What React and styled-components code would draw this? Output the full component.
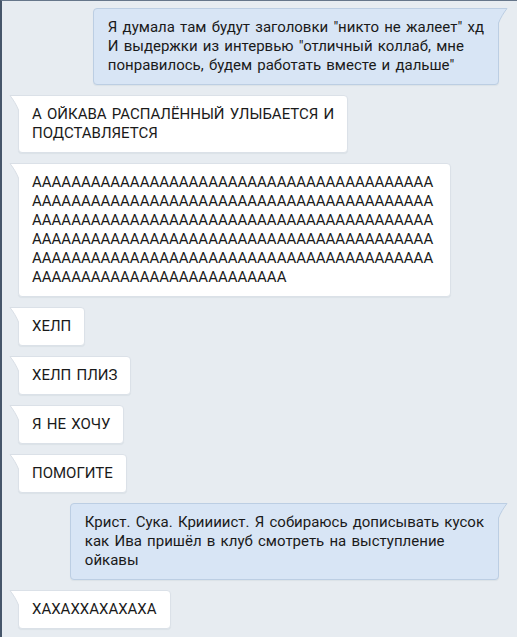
import React from "react";
import styled, { createGlobalStyle } from "styled-components";

const GlobalStyle = createGlobalStyle`
  html, body {
    margin: 0;
    padding: 0;
    background: #e7ecf1;
  }
  * {
    box-sizing: border-box;
  }
`;

const messages = [
  {
    out: true,
    text:
      'Я думала там будут заголовки "никто не жалеет" хд\nИ выдержки из интервью "отличный коллаб, мне\nпонравилось, будем работать вместе и дальше"',
  },
  { out: false, text: "А ОЙКАВА РАСПАЛЁННЫЙ УЛЫБАЕТСЯ И\nПОДСТАВЛЯЕТСЯ" },
  { out: false, text: "А".repeat(231), long: true },
  { out: false, text: "ХЕЛП" },
  { out: false, text: "ХЕЛП ПЛИЗ" },
  { out: false, text: "Я НЕ ХОЧУ" },
  { out: false, text: "ПОМОГИТЕ" },
  {
    out: true,
    text:
      "Крист. Сука. Криииист. Я собираюсь дописывать кусок\nкак Ива пришёл в клуб смотреть на выступление\nойкавы",
  },
  { out: false, text: "ХАХАХХАХАХАХА" },
];

const Tail = ({ out }) => {
  const fill = out ? "#d8e5f5" : "#ffffff";
  const stroke = out ? "#bccee3" : "#d9dfe6";
  return (
    <TailSvg $out={out} width="11" height="16" viewBox="0 0 11 16">
      <path d="M0 0 H10 C6.5 5 3.5 10 1.5 15 L0 15 Z" fill={fill} />
      <path
        d="M0 0.5 H10 C6.5 5 3.5 10 1.5 15"
        fill="none"
        stroke={stroke}
        strokeWidth="1"
      />
    </TailSvg>
  );
};

export default function App() {
  return (
    <>
      <GlobalStyle />
      <Screen>
        <Feed>
          {messages.map((m, i) => (
            <Row key={i} $out={m.out}>
              <Bubble $out={m.out} $long={m.long}>
                {m.text}
                <Tail out={m.out} />
              </Bubble>
            </Row>
          ))}
        </Feed>
      </Screen>
    </>
  );
}

const Screen = styled.div`
  width: 517px;
  height: 637px;
  overflow: hidden;
  background: #e7ecf1;
  border-left: 2px solid #46566a;
  border-top: 1px solid #66768a;
  font-family: Roboto, "Noto Sans", sans-serif;
`;

const Feed = styled.div`
  display: flex;
  flex-direction: column;
  gap: 10px;
  padding: 7px 18px 0 16px;
`;

const Row = styled.div`
  display: flex;
  justify-content: ${(p) => (p.$out ? "flex-end" : "flex-start")};
`;

const Bubble = styled.div`
  position: relative;
  max-width: 433px;
  padding: 9px ${(p) => (p.$out ? "14px" : "13px")};
  font-size: 15px;
  line-height: 19px;
  word-spacing: 1.5px;
  color: #1a1a1a;
  white-space: ${(p) => (p.$long ? "normal" : "pre")};
  word-break: ${(p) => (p.$long ? "break-all" : "normal")};
  border-radius: 4px;
  border-top-${(p) => (p.$out ? "right" : "left")}-radius: 0;
  background: ${(p) => (p.$out ? "#d8e5f5" : "#ffffff")};
  border: 1px solid ${(p) => (p.$out ? "#bccee3" : "#dbe1e8")};
  box-shadow: 0 1px 1px rgba(40, 60, 90, 0.06);
`;

const TailSvg = styled.svg`
  position: absolute;
  top: -1px;
  ${(p) => (p.$out ? "right: -10px;" : "left: -10px; transform: scaleX(-1);")}
  display: block;
`;
